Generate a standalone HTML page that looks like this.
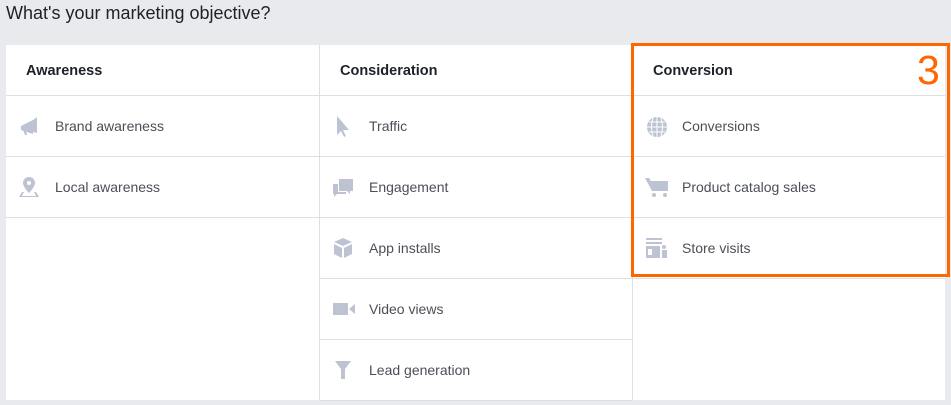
<!DOCTYPE html>
<html><head><style>
*{margin:0;padding:0;box-sizing:border-box}
body{width:951px;height:405px;background:#e9eaed;font-family:"Liberation Sans",sans-serif;position:relative;overflow:hidden}
.t{position:absolute;left:6px;top:3px;font-size:18px;color:#1d2129}
.panel{position:absolute;left:6px;top:45px;width:939px;height:355px;background:#fff}
.col{position:absolute;top:0;height:355px;border-right:1px solid #dddfe2}
.h{height:51px;border-bottom:1px solid #dddfe2;font-weight:bold;font-size:14.5px;color:#1d2129;padding:18px 0 0 20px}
.r{height:61px;border-bottom:1px solid #dddfe2;position:relative;font-size:14px;color:#4b4f56}
.r span{position:absolute;left:49px;top:22px}
.r svg{position:absolute;left:12px;top:19px}
.box{position:absolute;left:631px;top:43px;width:319px;height:234px;border:3px solid #ff6600}
.n{position:absolute;left:917px;top:50px;font-size:41px;color:#ff6600;line-height:1}
</style></head><body>
<div class="t">What's your marketing objective?</div>
<div class="panel">
<div class="col" style="left:0;width:314px">
<div class="h">Awareness</div>
<div class="r"><svg width="22" height="22" viewBox="0 0 22 22" fill="#bec3d3"><path d="M3 11l12-6v14L3 15z"/><path d="M15 5l4-3v16l-4 -1z"/><path d="M5 15l2 5h2l-1-5z"/></svg><span>Brand awareness</span></div>
<div class="r"><svg width="22" height="22" viewBox="0 0 22 22" fill="#bec3d3"><path d="M11 1a6 6 0 0 0-6 6c0 4 6 10 6 10s6-6 6-10a6 6 0 0 0-6-6zm0 4a2 2 0 1 1 0 4a2 2 0 0 1 0-4z"/><path d="M1 21l3-5h2l-2 4h14l-2-4h2l3 5z"/></svg><span>Local awareness</span></div>
</div>
<div class="col" style="left:314px;width:313px">
<div class="h">Consideration</div>
<div class="r"><svg width="22" height="22" viewBox="0 0 22 22" fill="#bec3d3"><path d="M5 1v19l4-4 3 6 2-1-3-6h6z"/></svg><span>Traffic</span></div>
<div class="r"><svg width="22" height="22" viewBox="0 0 22 22" fill="#bec3d3"><path d="M7 3h14v12h-3v3l-3-3H7z"/><path d="M1 8h5v8h8v2H5l-3 3v-3H1z"/></svg><span>Engagement</span></div>
<div class="r"><svg width="22" height="22" viewBox="0 0 22 22" fill="#bec3d3"><path d="M11 1l9 4-9 4-9-4z"/><path d="M2 7l8 4v10l-8-4z"/><path d="M20 7l-8 4v10l8-4z"/></svg><span>App installs</span></div>
<div class="r"><svg width="24" height="22" viewBox="0 0 24 22" fill="#bec3d3"><rect x="1" y="5" width="15" height="12"/><path d="M17 11l6-5v10z"/></svg><span>Video views</span></div>
<div class="r"><svg width="22" height="22" viewBox="0 0 22 22" fill="#bec3d3"><path d="M3 2h16l-6 8v10h-4V10z"/></svg><span>Lead generation</span></div>
</div>
<div class="col" style="left:627px;width:312px;border-right:none">
<div class="h">Conversion</div>
<div class="r"><svg width="24" height="24" viewBox="0 0 24 24" fill="none" stroke="#bec3d3" stroke-width="2"><circle cx="12" cy="12" r="10" fill="#bec3d3" stroke="none"/><path d="M2 12h20M12 2v20M4 7h16M4 17h16M8 3c-2 6-2 12 0 18M16 3c2 6 2 12 0 18" stroke="#fff" stroke-width="1"/></svg><span>Conversions</span></div>
<div class="r"><svg width="24" height="22" viewBox="0 0 24 22" fill="#bec3d3"><path d="M0 2h4l2 3h17v10H7z"/><circle cx="9" cy="19" r="2"/><circle cx="20" cy="19" r="2"/></svg><span>Product catalog sales</span></div>
<div class="r"><svg width="24" height="22" viewBox="0 0 24 22" fill="#bec3d3"><rect x="1" y="1" width="16" height="2"/><rect x="1" y="5" width="16" height="2"/><path d="M1 9h14v12H1zm2 3v6h4v-6z"/><circle cx="19" cy="10" r="2"/><rect x="17" y="13" width="5" height="8"/></svg><span>Store visits</span></div>
</div>
</div>
<div class="box"></div>
<div class="n">3</div>
</body></html>
